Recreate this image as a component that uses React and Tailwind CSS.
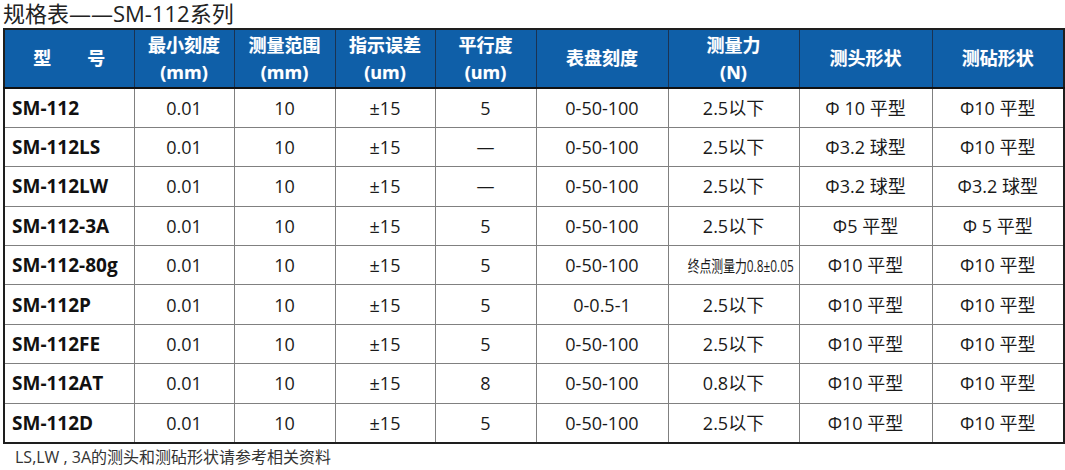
import React from "react";

const cols = [130, 100, 101, 100, 101, 132, 131, 133, 132];

const headers = [
  ["型\u3000\u3000号"],
  ["最小刻度", "(mm)"],
  ["测量范围", "(mm)"],
  ["指示误差", "(um)"],
  ["平行度", "(um)"],
  ["表盘刻度"],
  ["测量力", "(N)"],
  ["测头形状"],
  ["测砧形状"],
];

const rows = [
  ["SM-112", "0.01", "10", "±15", "5", "0-50-100", "2.5以下", "Φ 10 平型", "Φ10 平型"],
  ["SM-112LS", "0.01", "10", "±15", "—", "0-50-100", "2.5以下", "Φ3.2 球型", "Φ10 平型"],
  ["SM-112LW", "0.01", "10", "±15", "—", "0-50-100", "2.5以下", "Φ3.2 球型", "Φ3.2 球型"],
  ["SM-112-3A", "0.01", "10", "±15", "5", "0-50-100", "2.5以下", "Φ5 平型", "Φ 5 平型"],
  ["SM-112-80g", "0.01", "10", "±15", "5", "0-50-100", "SMALL", "Φ10 平型", "Φ10 平型"],
  ["SM-112P", "0.01", "10", "±15", "5", "0-0.5-1", "2.5以下", "Φ10 平型", "Φ10 平型"],
  ["SM-112FE", "0.01", "10", "±15", "5", "0-50-100", "2.5以下", "Φ10 平型", "Φ10 平型"],
  ["SM-112AT", "0.01", "10", "±15", "8", "0-50-100", "0.8以下", "Φ10 平型", "Φ10 平型"],
  ["SM-112D", "0.01", "10", "±15", "5", "0-50-100", "2.5以下", "Φ10 平型", "Φ10 平型"],
];

const font = {
  fontFamily: '"Open Sans", "Noto Sans CJK SC", sans-serif',
};

export default function App() {
  return (
    <div className="w-[1065px] h-[470px] bg-white text-[#1a1a1a]" style={font}>
      <div className="pl-[3px] h-[28px] text-[22px] leading-[27px] text-[#222]">
        规格表——SM-112系列
      </div>
      <table className="ml-[3px] w-[1060px] border-collapse border-2 border-[#1e1e1e] table-fixed">
        <colgroup>
          {cols.map((w, i) => (
            <col key={i} style={{ width: w }} />
          ))}
        </colgroup>
        <thead>
          <tr className="h-[59px] bg-[#0f5fa8]">
            {headers.map((h, i) => (
              <th
                key={i}
                className="border border-[#1b3352] border-b-2 border-b-[#111] p-0 text-white font-bold text-[18px] leading-[27px] text-center"
                style={{ textShadow: "0 0 1px rgba(255,255,255,0.4)" }}
              >
                {h.map((t, j) => (
                  <div key={j}>{t}</div>
                ))}
              </th>
            ))}
          </tr>
        </thead>
        <tbody>
          {rows.map((r, i) => (
            <tr key={i} className="h-[39.4px]">
              {r.map((c, j) => (
                <td
                  key={j}
                  className={
                    "border border-[#808080] p-0 leading-[22px] whitespace-nowrap " +
                    (j === 0
                      ? "text-left pl-[7px] font-bold text-[19px] text-[#111]"
                      : "text-center text-[18px]")
                  }
                >
                  {c === "SMALL" ? (
                    <span className="inline-block text-[16px] scale-x-[0.74] whitespace-nowrap">
                      终点测量力0.8±0.05
                    </span>
                  ) : (
                    c
                  )}
                </td>
              ))}
            </tr>
          ))}
        </tbody>
      </table>
      <div className="pl-[15px] pt-[3px] text-[16px] leading-[20px] text-[#333]">
        LS,LW , 3A的测头和测砧形状请参考相关资料
      </div>
    </div>
  );
}
